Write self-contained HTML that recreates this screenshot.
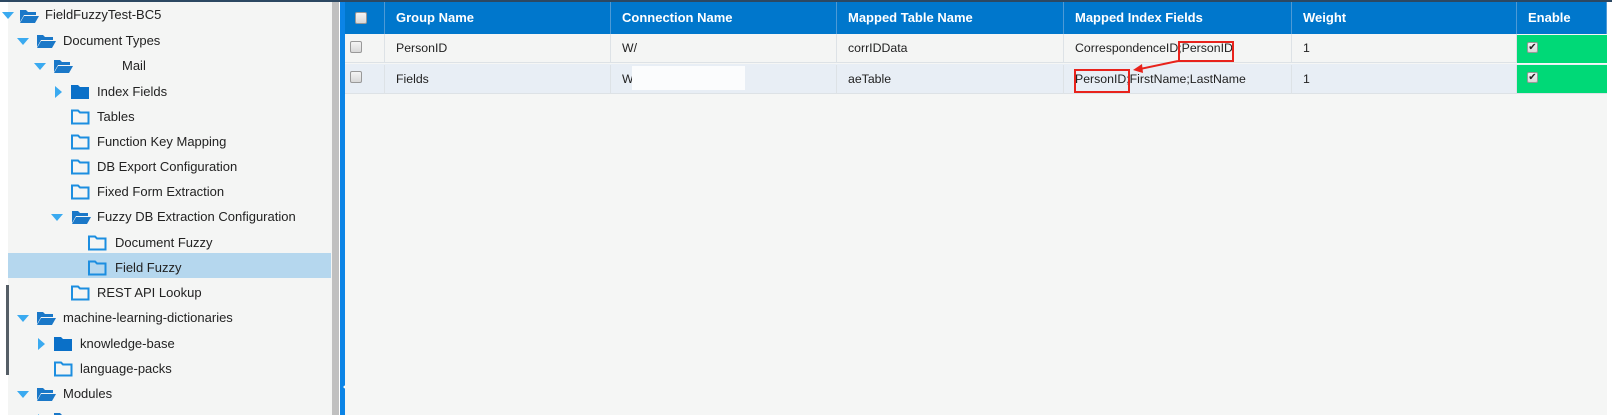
<!DOCTYPE html>
<html><head><meta charset="utf-8"><style>
*{margin:0;padding:0;box-sizing:border-box}
body{width:1612px;height:415px;overflow:hidden;background:#fff;font-family:"Liberation Sans",Arial,sans-serif;font-size:13px;color:#222;position:relative}
.a{position:absolute}
.t{position:absolute;white-space:nowrap;line-height:16px}
.hd{position:absolute;top:2px;height:32px;background:#0077cc;color:#fff;font-weight:bold;line-height:32px;padding-left:11px;border-right:1px solid #4d9ad6}
.c{position:absolute;line-height:28px;padding-left:11px;border-right:1px solid #dde2e6;white-space:nowrap;font-size:12.3px}
.cb{position:absolute;width:12px;height:12px;border:1px solid #999;border-radius:2px;background:linear-gradient(#f4f4f4,#d8d8d8)}
</style></head><body>
<div class="a" style="left:0;top:0;width:332px;height:415px;background:#f4f5f4"></div>
<div class="a" style="left:0;top:0;width:8px;height:415px;background:#fff"></div>
<div class="a" style="left:6px;top:285px;width:3px;height:90px;background:#555e66"></div>
<div class="a" style="left:0;top:0;width:1612px;height:2px;background:#2c4862"></div>
<div class="a" style="left:8px;top:253px;width:323px;height:25px;background:#b5d7ee"></div>
<div class="a" style="left:332px;top:2px;width:7px;height:413px;background:#c0c0c0"></div>
<div class="a" style="left:339px;top:2px;width:1px;height:413px;background:#fff"></div>
<div class="a" style="left:340px;top:2px;width:5px;height:413px;background:#0b84e6"></div>
<div class="a" style="left:340px;top:363px;width:14px;height:52px;background:#0b84e6"></div>
<svg class="a" style="left:341px;top:380px" width="12" height="14"><path d="M9 1 L2 7 L9 13 Z" fill="#fff"/></svg>

<svg class="a" style="left:0;top:0" width="332" height="415">
<defs>
<g id="open"><path d="M0 2 h6 l2 2 h8 v3 H4 L0 14 Z" fill="#1a78c8"/><path d="M4 8 H19 L15 15 H0 Z" fill="#1a78c8"/></g>
<g id="closed"><path d="M0 1 h7 l2 2 h9 v12 H0 Z" fill="#0a70c8"/></g>
<g id="outl"><path d="M1 1.5 h6 l2 2 h8.5 v11 H1 Z" fill="none" stroke="#1c8ee0" stroke-width="2"/></g>
<path id="down" d="M0 0 H12 L6 7 Z" fill="#3aaaf0"/>
<path id="right" d="M0 0 L7 6 L0 12 Z" fill="#3aaaf0"/>
</defs>
<use href="#down" x="2" y="12"/><use href="#open" x="20" y="8"/>
<use href="#down" x="17" y="38"/><use href="#open" x="37" y="33"/>
<use href="#down" x="34" y="63"/><use href="#open" x="54" y="58"/>
<use href="#right" x="55" y="86"/><use href="#closed" x="71" y="84"/>
<use href="#outl" x="71" y="109"/>
<use href="#outl" x="71" y="134"/>
<use href="#outl" x="71" y="159"/>
<use href="#outl" x="71" y="184"/>
<use href="#down" x="51" y="214"/><use href="#open" x="72" y="209"/>
<use href="#outl" x="88" y="235"/>
<use href="#outl" x="88" y="260"/>
<use href="#outl" x="71" y="285"/>
<use href="#down" x="17" y="315"/><use href="#open" x="37" y="310"/>
<use href="#right" x="38" y="338"/><use href="#closed" x="54" y="336"/>
<use href="#outl" x="54" y="361"/>
<use href="#down" x="17" y="391"/><use href="#open" x="37" y="386"/>
<use href="#right" x="38" y="414"/><use href="#open" x="54" y="411"/>
</svg>
<div class="t" style="left:45px;top:7px">FieldFuzzyTest-BC5</div>
<div class="t" style="left:63px;top:33px">Document Types</div>
<div class="t" style="left:122px;top:58px">Mail</div>
<div class="t" style="left:97px;top:84px">Index Fields</div>
<div class="t" style="left:97px;top:109px">Tables</div>
<div class="t" style="left:97px;top:134px">Function Key Mapping</div>
<div class="t" style="left:97px;top:159px">DB Export Configuration</div>
<div class="t" style="left:97px;top:184px">Fixed Form Extraction</div>
<div class="t" style="left:97px;top:209px">Fuzzy DB Extraction Configuration</div>
<div class="t" style="left:115px;top:235px">Document Fuzzy</div>
<div class="t" style="left:115px;top:260px">Field Fuzzy</div>
<div class="t" style="left:97px;top:285px">REST API Lookup</div>
<div class="t" style="left:63px;top:310px">machine-learning-dictionaries</div>
<div class="t" style="left:80px;top:336px">knowledge-base</div>
<div class="t" style="left:80px;top:361px">language-packs</div>
<div class="t" style="left:63px;top:386px">Modules</div>

<div class="a" style="left:345px;top:2px;width:1262px;height:413px;background:#f5f6f5"></div>
<div class="hd" style="left:345px;width:40px"></div>
<div class="cb" style="left:355px;top:12px"></div>
<div class="hd" style="left:385px;width:226px">Group Name</div>
<div class="hd" style="left:611px;width:226px">Connection Name</div>
<div class="hd" style="left:837px;width:227px">Mapped Table Name</div>
<div class="hd" style="left:1064px;width:228px">Mapped Index Fields</div>
<div class="hd" style="left:1292px;width:225px">Weight</div>
<div class="hd" style="left:1517px;width:90px">Enable</div>

<div class="a" style="left:345px;top:34px;width:1262px;height:29px;background:#f4f5f4;border-bottom:1px solid #dde2e6"></div>
<div class="a" style="left:345px;top:64px;width:1262px;height:30px;background:#e8eef5;border-bottom:1px solid #dde2e6"></div>
<div class="c" style="left:345px;top:34px;width:40px;height:29px"></div>
<div class="cb" style="left:350px;top:41px"></div>
<div class="c" style="left:385px;top:34px;width:226px">PersonID</div>
<div class="c" style="left:611px;top:34px;width:226px">W/</div>
<div class="c" style="left:837px;top:34px;width:227px">corrIDData</div>
<div class="c" style="left:1064px;top:34px;width:228px">CorrespondenceID;PersonID</div>
<div class="c" style="left:1292px;top:34px;width:225px">1</div>
<div class="a" style="left:1517px;top:35px;width:90px;height:28px;background:#00d977"></div>

<div class="c" style="left:345px;top:65px;width:40px;height:29px"></div>
<div class="cb" style="left:350px;top:71px"></div>
<div class="c" style="left:385px;top:65px;width:226px">Fields</div>
<div class="c" style="left:611px;top:65px;width:226px">W</div>
<div class="a" style="left:632px;top:66px;width:113px;height:24px;background:#fbfcfd"></div>
<div class="c" style="left:837px;top:65px;width:227px">aeTable</div>
<div class="c" style="left:1064px;top:65px;width:228px">PersonID;FirstName;LastName</div>
<div class="c" style="left:1292px;top:65px;width:225px">1</div>
<div class="a" style="left:1517px;top:65px;width:90px;height:28px;background:#00d977"></div>

<div class="cb" style="left:1527px;top:42px;width:11px;height:11px;font-size:10px;line-height:9px;text-align:center">✔</div>
<div class="cb" style="left:1527px;top:72px;width:11px;height:11px;font-size:10px;line-height:9px;text-align:center">✔</div>

<div class="a" style="left:1178px;top:41px;width:56px;height:21px;border:2px solid #e8231c"></div>
<div class="a" style="left:1074px;top:69px;width:56px;height:24px;border:2px solid #e8231c"></div>
<svg class="a" style="left:1125px;top:55px" width="60" height="25"><path d="M53 6 L15 14" stroke="#e8231c" stroke-width="2"/><path d="M8 15 L17 9 L18 18 Z" fill="#e8231c"/></svg>
</body></html>
